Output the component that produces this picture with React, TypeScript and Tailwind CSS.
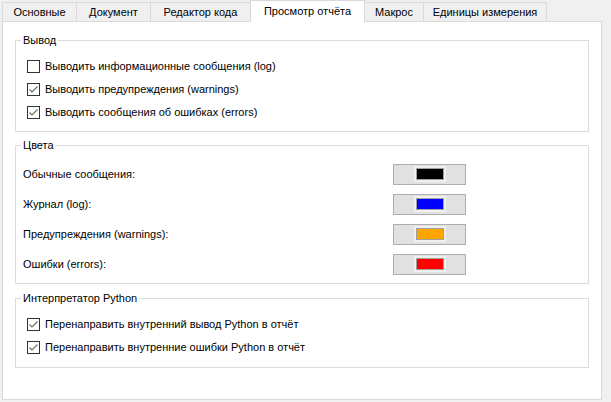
const tabs = [
  { label: "Основные", w: "w-[75px]" },
  { label: "Документ", w: "w-[75px]" },
  { label: "Редактор кода", w: "w-[101px]" },
  { label: "Просмотр отчёта", w: "w-[115px]", active: true },
  { label: "Макрос", w: "w-[60px]" },
  { label: "Единицы измерения", w: "w-[124px]" },
];

const colors = [
  { label: "Обычные сообщения:", color: "bg-[#000000]" },
  { label: "Журнал (log):", color: "bg-[#0000ff]" },
  { label: "Предупреждения (warnings):", color: "bg-[#ffa500]" },
  { label: "Ошибки (errors):", color: "bg-[#ff0000]" },
];

function CheckBox({ checked, label }: { checked?: boolean; label: string }) {
  return (
    <div className="flex h-[23px] items-center gap-[5px]">
      <div className="flex h-[13px] w-[13px] items-center justify-center border border-[#333333] bg-white">
        {checked && (
          <svg width="11" height="11" viewBox="0 0 11 11" fill="none">
            <path d="M1.5 5.5 L4 8 L9.5 2.5" stroke="#6b6b6b" strokeWidth="1.1" />
          </svg>
        )}
      </div>
      <span>{label}</span>
    </div>
  );
}

function Group({ title, className, children }: { title: string; className: string; children: React.ReactNode }) {
  return (
    <div className={`relative border border-[#dcdcdc] ${className}`}>
      <span className="absolute -top-[8px] left-[5px] bg-white px-[2px] leading-[14px]">{title}</span>
      {children}
    </div>
  );
}

export default function App() {
  return (
    <div className="h-[402px] w-[611px] bg-[#f0f0f0] pl-[2px] font-['Liberation_Sans',Arial,sans-serif] text-[11px] text-black">
      {/* Tab strip */}
      <div className="flex h-[21px] items-end">
        {tabs.map((t, i) =>
          t.active ? (
            <div
              key={t.label}
              className={`relative z-10 -mb-px -ml-px flex h-[22px] items-center justify-center border border-b-0 border-[#d9d9d9] bg-white pb-[1px] ${t.w}`}
            >
              {t.label}
            </div>
          ) : (
            <div
              key={t.label}
              className={`flex h-[19px] items-center justify-center border border-b-0 border-[#d9d9d9] bg-[#f0f0f0] pt-[1px] ${t.w} ${i > 0 ? "-ml-px" : ""}`}
            >
              {t.label}
            </div>
          )
        )}
      </div>

      {/* Page */}
      <div className="flex h-[379px] w-[600px] flex-col border border-[#d9d9d9] bg-white px-3 pt-[18px]">
        <Group title="Вывод" className="h-[92px] pl-[11px] pt-[14px]">
          <CheckBox label="Выводить информационные сообщения (log)" />
          <CheckBox checked label="Выводить предупреждения (warnings)" />
          <CheckBox checked label="Выводить сообщения об ошибках (errors)" />
        </Group>

        <Group title="Цвета" className="mt-[13px] h-[139px] pl-[7px] pt-[13px]">
          <div className="grid grid-cols-[370px_73px]">
            {colors.map((c) => (
              <div key={c.label} className="contents">
                <div className="flex h-[30px] items-center">{c.label}</div>
                <div className="flex h-[30px] items-center">
                  <div className="flex h-[21px] w-[73px] items-center justify-center border border-[#adadad] bg-[#e1e1e1]">
                    <div className="flex h-[16px] w-[32px] items-center justify-center bg-[#f0f0f0]">
                      <div className={`h-[12px] w-[28px] border border-[#a0a0a0] ${c.color}`} />
                    </div>
                  </div>
                </div>
              </div>
            ))}
          </div>
        </Group>

        <Group title="Интерпретатор Python" className="mt-[14px] h-[70px] pl-[11px] pt-[14px]">
          <CheckBox checked label="Перенаправить внутренний вывод Python в отчёт" />
          <CheckBox checked label="Перенаправить внутренние ошибки Python в отчёт" />
        </Group>
      </div>
    </div>
  );
}
